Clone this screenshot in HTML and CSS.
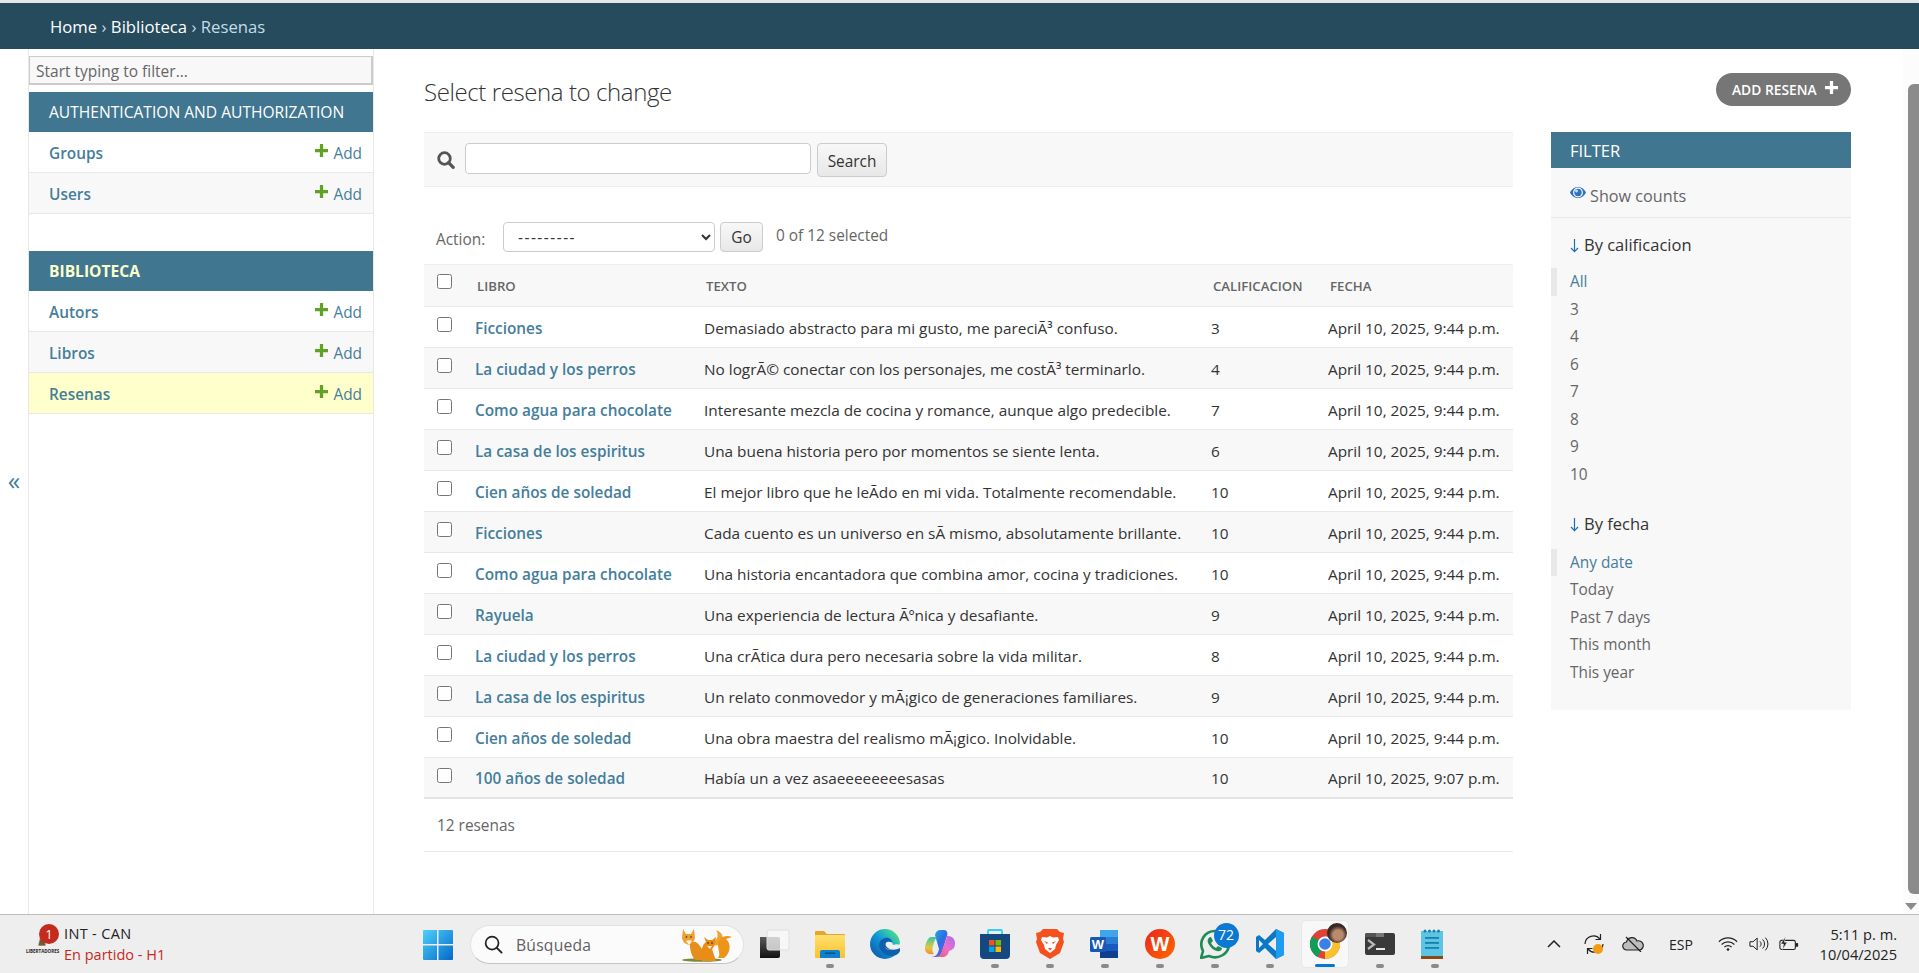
FILE: index.html
```html
<!DOCTYPE html>
<html lang="en">
<head>
<meta charset="utf-8">
<title>Select resena to change</title>
<link rel="stylesheet" href="styles.css">
</head>
<body>
<header class="crumbs"><a>Home</a> › <a>Biblioteca</a> › <span class="crumb-here">Resenas</span></header>
<div class="page">
  <button class="toggle">«</button>
  <nav class="sidebar">
    <input class="nav-filter" placeholder="Start typing to filter...">
    <section class="module">
      <h2 class="mod-head">AUTHENTICATION AND AUTHORIZATION</h2>
      <div class="mod-row"><a class="mod-link">Groups</a><a class="mod-add"><svg class="plus" viewBox="0 0 12 12"><path d="M4.500 0h3v4.500H12v3H7.500V12h-3V7.500H0v-3h4.500z"/></svg>Add</a></div>
      <div class="mod-row alt"><a class="mod-link">Users</a><a class="mod-add"><svg class="plus" viewBox="0 0 12 12"><path d="M4.500 0h3v4.500H12v3H7.500V12h-3V7.500H0v-3h4.500z"/></svg>Add</a></div>
    </section>
    <section class="module">
      <h2 class="mod-head current">BIBLIOTECA</h2>
      <div class="mod-row"><a class="mod-link">Autors</a><a class="mod-add"><svg class="plus" viewBox="0 0 12 12"><path d="M4.500 0h3v4.500H12v3H7.500V12h-3V7.500H0v-3h4.500z"/></svg>Add</a></div>
      <div class="mod-row alt"><a class="mod-link">Libros</a><a class="mod-add"><svg class="plus" viewBox="0 0 12 12"><path d="M4.500 0h3v4.500H12v3H7.500V12h-3V7.500H0v-3h4.500z"/></svg>Add</a></div>
      <div class="mod-row active"><a class="mod-link">Resenas</a><a class="mod-add"><svg class="plus" viewBox="0 0 12 12"><path d="M4.500 0h3v4.500H12v3H7.500V12h-3V7.500H0v-3h4.500z"/></svg>Add</a></div>
    </section>
  </nav>
  <main class="content">
    <div class="title-row">
      <h1 class="title">Select resena to change</h1>
      <a class="add-btn">ADD RESENA<svg class="plus-white" viewBox="0 0 12 12"><path d="M4.500 0h3v4.500H12v3H7.500V12h-3V7.500H0v-3h4.500z"/></svg></a>
    </div>
    <div class="columns">
      <div class="changelist">
        <form class="search-band">
          <svg class="search-icon" viewBox="0 0 18 18"><circle cx="7.500" cy="7.500" r="5.800" fill="none" stroke="#555" stroke-width="2.800"/><path d="M11.600 11.600l4.600 4.800" stroke="#555" stroke-width="3.200" stroke-linecap="round"/></svg>
          <input class="search-input">
          <button class="btn search-btn" type="button">Search</button>
        </form>
        <div class="actions">
          <label class="act-label">Action:</label>
          <select class="act-select"><option>---------</option></select>
          <button class="btn go-btn" type="button">Go</button>
          <span class="act-count">0 of 12 selected</span>
        </div>
        <table class="results">
          <thead>
            <tr><th class="c-check"><input type="checkbox" class="cb"></th><th class="c-libro">LIBRO</th><th class="c-texto">TEXTO</th><th class="c-cal">CALIFICACION</th><th class="c-fecha">FECHA</th></tr>
          </thead>
          <tbody>
            <tr><td class="c-check"><input type="checkbox" class="cb"></td><td class="c-libro"><a>Ficciones</a></td><td>Demasiado abstracto para mi gusto, me pareciÃ³ confuso.</td><td>3</td><td>April 10, 2025, 9:44 p.m.</td></tr>
            <tr><td class="c-check"><input type="checkbox" class="cb"></td><td class="c-libro"><a>La ciudad y los perros</a></td><td>No logrÃ© conectar con los personajes, me costÃ³ terminarlo.</td><td>4</td><td>April 10, 2025, 9:44 p.m.</td></tr>
            <tr><td class="c-check"><input type="checkbox" class="cb"></td><td class="c-libro"><a>Como agua para chocolate</a></td><td>Interesante mezcla de cocina y romance, aunque algo predecible.</td><td>7</td><td>April 10, 2025, 9:44 p.m.</td></tr>
            <tr><td class="c-check"><input type="checkbox" class="cb"></td><td class="c-libro"><a>La casa de los espiritus</a></td><td>Una buena historia pero por momentos se siente lenta.</td><td>6</td><td>April 10, 2025, 9:44 p.m.</td></tr>
            <tr><td class="c-check"><input type="checkbox" class="cb"></td><td class="c-libro"><a>Cien años de soledad</a></td><td>El mejor libro que he leÃ­do en mi vida. Totalmente recomendable.</td><td>10</td><td>April 10, 2025, 9:44 p.m.</td></tr>
            <tr><td class="c-check"><input type="checkbox" class="cb"></td><td class="c-libro"><a>Ficciones</a></td><td>Cada cuento es un universo en sÃ­ mismo, absolutamente brillante.</td><td>10</td><td>April 10, 2025, 9:44 p.m.</td></tr>
            <tr><td class="c-check"><input type="checkbox" class="cb"></td><td class="c-libro"><a>Como agua para chocolate</a></td><td>Una historia encantadora que combina amor, cocina y tradiciones.</td><td>10</td><td>April 10, 2025, 9:44 p.m.</td></tr>
            <tr><td class="c-check"><input type="checkbox" class="cb"></td><td class="c-libro"><a>Rayuela</a></td><td>Una experiencia de lectura Ãºnica y desafiante.</td><td>9</td><td>April 10, 2025, 9:44 p.m.</td></tr>
            <tr><td class="c-check"><input type="checkbox" class="cb"></td><td class="c-libro"><a>La ciudad y los perros</a></td><td>Una crÃ­tica dura pero necesaria sobre la vida militar.</td><td>8</td><td>April 10, 2025, 9:44 p.m.</td></tr>
            <tr><td class="c-check"><input type="checkbox" class="cb"></td><td class="c-libro"><a>La casa de los espiritus</a></td><td>Un relato conmovedor y mÃ¡gico de generaciones familiares.</td><td>9</td><td>April 10, 2025, 9:44 p.m.</td></tr>
            <tr><td class="c-check"><input type="checkbox" class="cb"></td><td class="c-libro"><a>Cien años de soledad</a></td><td>Una obra maestra del realismo mÃ¡gico. Inolvidable.</td><td>10</td><td>April 10, 2025, 9:44 p.m.</td></tr>
            <tr><td class="c-check"><input type="checkbox" class="cb"></td><td class="c-libro"><a>100 años de soledad</a></td><td>Había un a vez asaeeeeeeeesasas</td><td>10</td><td>April 10, 2025, 9:07 p.m.</td></tr>
          </tbody>
        </table>
        <p class="paginator">12 resenas</p>
      </div>
      <aside class="filter">
        <h2 class="filter-head">FILTER</h2>
        <div class="counts"><svg class="eye" viewBox="0 0 16 16"><path d="M0 7.500C2 3.500 5 2 8 2s6 1.500 8 5.500C14 11.500 11 13 8 13S2 11.500 0 7.500z" fill="#2f74c0"/><circle cx="8" cy="7.500" r="4.300" fill="#2f74c0" stroke="#fff" stroke-width="1.200"/><circle cx="6.500" cy="6" r="1.400" fill="#cfe2f5"/></svg>Show counts</div>
        <div class="facet">
          <h3 class="facet-title"><svg class="arrow" viewBox="0 0 9 15"><path d="M4.500 1v12.500M1 10l3.500 3.700L8 10" fill="none" stroke="#1f6fb8" stroke-width="1.200"/></svg>By calificacion</h3>
          <ul class="facet-list">
            <li class="on">All</li><li>3</li><li>4</li><li>6</li><li>7</li><li>8</li><li>9</li><li>10</li>
          </ul>
        </div>
        <div class="facet">
          <h3 class="facet-title"><svg class="arrow" viewBox="0 0 9 15"><path d="M4.500 1v12.500M1 10l3.500 3.700L8 10" fill="none" stroke="#1f6fb8" stroke-width="1.200"/></svg>By fecha</h3>
          <ul class="facet-list">
            <li class="on">Any date</li><li>Today</li><li>Past 7 days</li><li>This month</li><li>This year</li>
          </ul>
        </div>
      </aside>
    </div>
  </main>
  <div class="scrollbar"><div class="thumb"></div><div class="scroll-arrow"></div></div>
</div>
<footer class="taskbar">
  <div class="news">
    <div class="news-icon">
      <svg class="trophy" viewBox="0 0 14 24"><path d="M7 1c2 3 1 6 2 9l3 12H2L5 10c1-3 0-6 2-9z" fill="#a8895a"/><path d="M3 22l2-8h4l2 8z" fill="#6d5a3a"/></svg>
      <span class="lib-text">LIBERTADORES</span>
      <span class="news-badge">1</span>
    </div>
    <div class="news-text"><span class="news-a">INT - CAN</span><span class="news-b">En partido - H1</span></div>
  </div>
  <svg class="start" viewBox="0 0 30 30">
    <defs><linearGradient id="win" x1="0" y1="0" x2="1" y2="1"><stop offset="0" stop-color="#4fd0fb"/><stop offset="1" stop-color="#0369c9"/></linearGradient></defs>
    <path d="M1 0h13v14H0V1a1 1 0 0 1 1-1zM15.500 0H29a1 1 0 0 1 1 1v13H15.500zM0 15.500h14V30H1a1 1 0 0 1-1-1zM15.500 15.500H30V29a1 1 0 0 1-1 1H15.500z" fill="url(#win)"/>
  </svg>
  <div class="search-pill">
    <svg class="pill-icon" viewBox="0 0 20 20"><circle cx="8.500" cy="8.500" r="6.800" fill="none" stroke="#222" stroke-width="1.800"/><path d="M13.500 13.500l5 5" stroke="#222" stroke-width="2" stroke-linecap="round"/></svg>
    <span class="pill-text">Búsqueda</span>
    <svg class="foxes" viewBox="0 0 54 34">
      <ellipse cx="24" cy="32" rx="20" ry="1.800" fill="#7d8a3a"/>
      <path d="M34 14c6-1 7-8 4-12 6 2 8 7 6 12-2 3-5 4-9 3z" fill="#f0a22c"/>
      <path d="M46 30c6-4 8-14 2-19l6-2c-8-3-14 2-14 8 0 5 3 9 0 13z" fill="#ee9418"/>
      <path d="M12 14c-1 5 2 17 6 18h10c-2-6-4-14-10-18z" fill="#e58e1c"/>
      <path d="M5 1l3 5h5l3-5 1 9c-1 4-3 6-6 7-4-1-6-3-7-7z" fill="#f0a030"/>
      <path d="M8 13l3 4 3-4c-1-1-5-1-6 0z" fill="#fff2d8"/>
      <path d="M24 26c-1-5 1-10 4-12l-2-5 4 3h4l4-3-1 6c0 3-2 5-3 6l4 12H24z" fill="#ea8d18"/>
      <path d="M29 18l3 3 2-3z" fill="#fff2d8"/>
      <circle cx="8.500" cy="9" r=".8" fill="#222"/><circle cx="13" cy="9" r=".8" fill="#222"/>
      <circle cx="30" cy="15" r=".8" fill="#222"/><circle cx="34" cy="15" r=".8" fill="#222"/>
    </svg>
  </div>
  <div class="apps">
    <div class="app"><div class="tile">
      <svg class="ico" viewBox="0 0 30 30"><defs><linearGradient id="tv" x1="0" y1="0" x2="0" y2="1"><stop offset="0" stop-color="#5a5a5a"/><stop offset="1" stop-color="#111"/></linearGradient></defs><rect x="-12" y="8" width="32" height="21" rx="2" fill="url(#tv)"/><rect x="7" y="1" width="22" height="20" rx="2" fill="#fafafa" fill-opacity=".75" stroke="#dedede"/></svg>
    </div></div>
    <div class="app"><div class="tile">
      <svg class="ico" viewBox="0 0 30 30"><defs><linearGradient id="fd" x1="0" y1="0" x2="0" y2="1"><stop offset="0" stop-color="#ffdf6d"/><stop offset="1" stop-color="#fbc22b"/></linearGradient></defs><path d="M0 3a1 1 0 0 1 1-1h8l3 3h17a1 1 0 0 1 1 1v22H0z" fill="#e3a72b"/><rect y="6" width="30" height="23" rx="1" fill="url(#fd)"/><path d="M5 29v-6a2 2 0 0 1 2-2h16a2 2 0 0 1 2 2v6z" fill="#0f7fcf"/><rect x="10" y="23.500" width="10" height="1.500" fill="#0b4f86"/></svg>
      <i class="dot"></i>
    </div></div>
    <div class="app"><div class="tile">
      <svg class="ico" viewBox="0 0 30 30"><defs><linearGradient id="ed" x1="0" y1="1" x2="1" y2="0"><stop offset="0" stop-color="#0a4f9e"/><stop offset=".5" stop-color="#1296d8"/><stop offset=".75" stop-color="#33c9a8"/><stop offset="1" stop-color="#7fe05a"/></linearGradient></defs><circle cx="15" cy="15" r="15" fill="url(#ed)"/><path d="M30 17c-3 1-7 2-11 1-3-1-3-4-1-5 2 0 3 1 4 2 1-4-3-7-7-6-5 1-7 6-5 11 2 4 6 7 11 7 4 0 8-2 9-5z" fill="#0f5fb0"/><path d="M15 18c1 3 6 4 10 2 2-1 4-3 5-6l1 4h-4c-3 3-9 4-12 0z" fill="#eeeeee"/><path d="M17 13c3-1 6 0 6 3 2-1 5-1 7 0v3c-4 2-9 2-12 0-3-2-3-5-1-6z" fill="#eeeeee"/></svg>
    </div></div>
    <div class="app"><div class="tile">
      <svg class="ico" viewBox="0 0 30 30"><defs><linearGradient id="co1" x1="0" y1="0" x2="1" y2="1"><stop offset="0" stop-color="#22b8e8"/><stop offset=".5" stop-color="#2c6fe0"/><stop offset="1" stop-color="#9b4fd8"/></linearGradient><linearGradient id="co2" x1="0" y1="1" x2="1" y2="0"><stop offset="0" stop-color="#f35a5a"/><stop offset=".5" stop-color="#ec6fd0"/><stop offset="1" stop-color="#a86be8"/></linearGradient><linearGradient id="co3" x1="0" y1="0" x2="0" y2="1"><stop offset="0" stop-color="#36c8a0"/><stop offset=".6" stop-color="#e0c840"/><stop offset="1" stop-color="#f09030"/></linearGradient></defs><path d="M10 6C11 2 13 1 16 1h3c3 0 4 3 3 6l-5 16c-1 3-3 5-6 5H6c6 0 7-4 8-8z" fill="url(#co1)"/><path d="M6 8h6c-2 2-3 5-4 9-1 3-1 6 1 8-5 1-9-1-9-5 0-5 3-12 6-12z" fill="url(#co3)"/><path d="M24 22c-1 4-3 6-7 6h-6c4 0 5-3 6-6l5-14c-1-2 0-1 1-1 4 0 7 3 7 7 0 5-2 7-6 8z" fill="url(#co2)"/></svg>
    </div></div>
    <div class="app"><div class="tile">
      <svg class="ico" viewBox="0 0 30 30"><path d="M8 6V2a1 1 0 0 1 1-1h12a1 1 0 0 1 1 1v4" fill="none" stroke="#2ed1f5" stroke-width="1.800"/><path d="M0 5h30v21a4 4 0 0 1-4 4H4a4 4 0 0 1-4-4z" fill="#15487f"/><rect x="9" y="11" width="5.500" height="5.500" fill="#f25022"/><rect x="15.500" y="11" width="5.500" height="5.500" fill="#7fba00"/><rect x="9" y="17.500" width="5.500" height="5.500" fill="#00a4ef"/><rect x="15.500" y="17.500" width="5.500" height="5.500" fill="#ffb900"/></svg>
      <i class="dot"></i>
    </div></div>
    <div class="app"><div class="tile">
      <svg class="ico" viewBox="0 0 30 30"><path d="M8 0h14l3 3 4 1-1 6 1 3-4 11-10 6-10-6L1 13l1-3-1-6 4-1z" fill="#f4511e"/><path d="M7 8l5 .5L15 7l3 1.500 5-.5 1 3-3 5-1 4-5 4-5-4-1-4-3-5z" fill="#fff"/><path d="M9 12l4 1.500-1 1.500zM21 12l-4 1.500 1 1.500zM13 19h4l-2 2.500z" fill="#f4511e"/></svg>
      <i class="dot"></i>
    </div></div>
    <div class="app"><div class="tile">
      <svg class="ico" viewBox="0 0 30 30"><path d="M10 1h17a1 1 0 0 1 1 1v26a1 1 0 0 1-1 1H10z" fill="#2b7cd3"/><rect x="10" y="1" width="18" height="7" fill="#41a5ee"/><rect x="10" y="15" width="18" height="7" fill="#185abd"/><rect x="10" y="22" width="18" height="7" fill="#103f91"/><rect y="8" width="16" height="15" rx="1.500" fill="#1a57b5"/><text x="8" y="20" class="word-w">W</text></svg>
      <i class="dot"></i>
    </div></div>
    <div class="app"><div class="tile">
      <svg class="ico" viewBox="0 0 30 30"><defs><linearGradient id="wps" x1="0" y1="0" x2="1" y2="1"><stop offset="0" stop-color="#e9241c"/><stop offset="1" stop-color="#ff6a00"/></linearGradient></defs><circle cx="15" cy="15" r="15" fill="url(#wps)"/><text x="15" y="22" class="wps-w">W</text></svg>
      <i class="dot"></i>
    </div></div>
    <div class="app"><div class="tile">
      <svg class="ico" viewBox="0 0 30 30"><path d="M1 29l2-7C-2 12 5 2 15 2c8 0 14 6 14 13 0 10-11 16-20 12z" fill="none" stroke="#1e8c55" stroke-width="2.600" stroke-linejoin="round"/><path d="M10 8c-2 1-3 3-2 6 2 4 5 7 9 8 3 1 5-1 5-3l-4-2-2 2c-2-1-4-3-5-5l2-2-2-4z" fill="#1e8c55"/></svg>
      <span class="wa-badge">72</span>
      <i class="dot"></i>
    </div></div>
    <div class="app"><div class="tile">
      <svg class="ico" viewBox="0 0 30 30"><path d="M21 0l8 4v22l-8 4-11-11-6 5-3-2v-14l3-2 6 5z" fill="#0a78c4"/><path d="M21 0l8 4v22l-8 4z" fill="#1f9cf0"/><path d="M21 8l-8 7 8 7z" fill="#eeeeee"/><path d="M4 11v8l4-4z" fill="#eeeeee"/></svg>
      <i class="dot"></i>
    </div></div>
    <div class="app"><div class="tile tile-on">
      <svg class="ico" viewBox="0 0 30 30"><circle cx="15" cy="15" r="15" fill="#db4437"/><path d="M2 22.500A15 15 0 0 1 2 7.500L15 15l-7.500 13A15 15 0 0 1 2 22.500z" fill="#0f9d58"/><path d="M15 30A15 15 0 0 0 28 7.500H15l0 7.500z" fill="#fbc02d"/><circle cx="15" cy="15" r="7.500" fill="#fff"/><circle cx="15" cy="15" r="5.800" fill="#3d7fe8"/></svg>
      <span class="avatar"><i class="avatar-face"></i></span>
      <i class="dot dot-on"></i>
    </div></div>
    <div class="app"><div class="tile">
      <svg class="ico" viewBox="0 0 30 22"><rect width="30" height="22" rx="2" fill="#3a3a3a"/><path d="M0 2a2 2 0 0 1 2-2h9v4H0z" fill="#545454"/><path d="M11 0h8v4h-8z" fill="#777"/><path d="M3 7l6 4.500L3 16" fill="none" stroke="#b8b8b8" stroke-width="2.200"/><rect x="11" y="15" width="9" height="2" fill="#e8e8e8"/></svg>
      <i class="dot"></i>
    </div></div>
    <div class="app"><div class="tile">
      <svg class="ico" viewBox="0 0 30 30"><rect x="1" y="2" width="22" height="27" fill="#5cc4e4"/><rect x="1" y="27" width="22" height="3" fill="#8a4a14"/><g fill="#1b7fa8"><circle cx="5" cy="2" r="1.500"/><circle cx="9.500" cy="2" r="1.500"/><circle cx="14" cy="2" r="1.500"/><circle cx="18.500" cy="2" r="1.500"/><rect x="5" y="8" width="14" height="1.800"/><rect x="5" y="13" width="14" height="1.800"/><rect x="5" y="18" width="14" height="1.800"/></g></svg>
      <i class="dot"></i>
    </div></div>
  </div>
  <div class="tray">
    <svg class="t-chev" viewBox="0 0 14 8"><path d="M1 7l6-6 6 6" fill="none" stroke="#222" stroke-width="1.500"/></svg>
    <span class="t-sync">
      <svg viewBox="0 0 22 22"><path d="M2 11a8.500 8.500 0 0 1 15-5M20 11a8.500 8.500 0 0 1-15 5" fill="none" stroke="#222" stroke-width="1.200"/><path d="M17.500 1v5.500h-5M4.500 21v-5.500h5" fill="none" stroke="#222" stroke-width="1.200"/><circle cx="15" cy="16" r="5" fill="#f39c12"/></svg>
    </span>
    <svg class="t-cloud" viewBox="0 0 22 16"><path d="M5 14a4 4 0 0 1-.5-8 5.500 5.500 0 0 1 10.500-1 4.500 4.500 0 0 1 3 9z" fill="#bdbdbd" stroke="#222" stroke-width="1.200"/><path d="M4 1l15 15" stroke="#222" stroke-width="1.200"/></svg>
    <span class="t-lang">ESP</span>
    <svg class="t-wifi" viewBox="0 0 22 16"><path d="M1 5.500a14 14 0 0 1 20 0M4 8.500a10 10 0 0 1 14 0M7 11.500a5.500 5.500 0 0 1 8 0" fill="none" stroke="#222" stroke-width="1.300"/><circle cx="11" cy="14" r="1.400" fill="#222"/></svg>
    <svg class="t-vol" viewBox="0 0 22 16"><path d="M1 5.500h3.500L9 1.500v13l-4.500-4H1z" fill="none" stroke="#222" stroke-width="1.100"/><path d="M12 5a4 4 0 0 1 0 6M15 3a7 7 0 0 1 0 10M18 1a10 10 0 0 1 0 14" fill="none" stroke="#222" stroke-width="1.100"/></svg>
    <svg class="t-bat" viewBox="0 0 22 16"><rect x="1" y="4" width="17" height="10" rx="2" fill="none" stroke="#222" stroke-width="1.200"/><rect x="18.500" y="7" width="2.500" height="4" fill="#222"/><path d="M7 0L2 8h3l-1 6 5-8H6z" fill="#222" stroke="#eee" stroke-width=".6"/></svg>
    <div class="t-clock"><span>5:11 p. m.</span><span>10/04/2025</span></div>
  </div>
</footer>
</body>
</html>
```
FILE: styles.css
```css
* { box-sizing: border-box; }
html, body { height: 100%; }
body {
  margin: 0;
  height: 973px;
  overflow: hidden;
  display: flex;
  flex-direction: column;
  background: #fff;
  color: #333;
  font-family: "Open Sans", "Noto Sans", sans-serif;
  font-size: 15.400px;
}
h1, h2, h3, p, ul { margin: 0; padding: 0; }
ul { list-style: none; }

.crumbs {
  height: 49px;
  flex: none;
  border-top: 3px solid #e6e6e6;
  background: #264b5d;
  color: #c4dce8;
  padding-left: 50px;
  font-size: 16.700px;
  line-height: 47px;
}
.crumbs a { color: #fff; }
.crumb-here { color: #c4dce8; }

.page { flex: 1; display: flex; min-height: 0; }

.toggle {
  width: 29px;
  flex: none;
  border: 0;
  border-right: 1px solid #e8e8e8;
  background: #fff;
  color: #447e9b;
  font-family: "Open Sans", sans-serif;
  font-size: 25px;
  padding: 0 0 4px;
}
.sidebar {
  width: 345px;
  flex: none;
  border-right: 1px solid #e8e8e8;
  padding-top: 7px;
}
.nav-filter {
  display: block;
  width: 100%;
  height: 29px;
  margin-bottom: 7px;
  padding: 2px 6px 0;
  border: 1px solid #ccc;
  border-width: 1px 2px 2px 1px;
  background: #f8f8f8;
  font: 15.500px "Open Sans", sans-serif;
  border-radius: 0;
}
.nav-filter::placeholder { color: #666; opacity: 1; }
.module { margin-bottom: 37px; }
.mod-head {
  height: 40px;
  padding-left: 20px;
  background: #417690;
  color: #fff;
  font-size: 15.600px;
  font-weight: 400;
  line-height: 40px;
}
.mod-head.current { color: #ffc; font-weight: 700; }
.mod-row {
  height: 41px;
  display: flex;
  align-items: center;
  justify-content: space-between;
  padding: 2px 11px 0 20px;
  border-bottom: 1px solid #e8e8e8;
}
.mod-row.alt { background: #f8f8f8; }
.mod-row.active { background: #ffc; }
.mod-link { color: #447e9b; font-weight: 600; font-size: 15.400px; }
.mod-add { color: #447e9b; font-size: 15.400px; display: flex; align-items: center; }
.plus { width: 13px; height: 13px; fill: #5fa225; margin: -6px 5px 0 0; }

.content { flex: 1; min-width: 0; padding: 24px 52px 0 50px; }
.title-row { display: flex; justify-content: space-between; align-items: flex-start; height: 35px; margin-bottom: 24px; }
.title { font-size: 24px; font-weight: 300; color: #333; letter-spacing: -0.4px; line-height: 38px; }
.add-btn {
  width: 135px;
  height: 33px;
  display: flex;
  align-items: center;
  gap: 8px;
  padding: 0 11px 0 16px;
  border-radius: 17px;
  background: #767676;
  color: #fff;
  font-size: 13.800px;
  font-weight: 600;
  white-space: nowrap;
}
.plus-white { width: 13px; height: 13px; fill: #fff; margin-top: -4px; flex: none; }

.columns { display: flex; gap: 38px; align-items: flex-start; }
.changelist { width: 1089px; flex: none; }

.search-band {
  height: 55px;
  display: flex;
  align-items: flex-start;
  padding: 10px 0 0 13px;
  background: #f8f8f8;
  border-top: 1px solid #eee;
  border-bottom: 1px solid #eee;
}
.search-icon { width: 18px; height: 18px; margin: 8px 10px 0 0; flex: none; }
.search-input {
  width: 346px;
  height: 31px;
  border: 1px solid #ccc;
  border-radius: 4px;
  background: #fff;
}
.btn {
  border: 1px solid #ccc;
  border-radius: 4px;
  background: linear-gradient(#f8f8f8, #e8e8e8);
  color: #333;
  font: 15.400px "Open Sans", sans-serif;
  padding: 0;
}
.search-btn { width: 70px; height: 34px; margin-left: 6px; padding-top: 2px; }
.actions { height: 77px; display: flex; align-items: flex-start; padding: 35px 0 0 12px; color: #666; }
.act-label { width: 67px; margin-top: 7px; }
.act-select {
  width: 212px;
  height: 30px;
  border: 1px solid #ccc;
  border-radius: 4px;
  background: #fff;
  padding-left: 10px;
  color: #333;
  font: 15.400px "Open Sans", sans-serif;
  letter-spacing: 1.500px;
}
.go-btn { width: 43px; height: 30px; margin-left: 5px; }
.act-count { margin: 3px 0 0 13px; }

.results { width: 100%; border-collapse: collapse; table-layout: fixed; }
.results th {
  height: 42px;
  padding: 0 0 0 2px;
  background: #f8f8f8;
  border-top: 1px solid #eee;
  border-bottom: 1px solid #e8e8e8;
  color: #666;
  font-size: 13.200px;
  font-weight: 600;
  text-align: left;
}
.results td {
  height: 41px;
  padding: 2px 0 0;
  border-bottom: 1px solid #e8e8e8;
  font-size: 15.350px;
}
.results tbody tr:nth-child(even) td { background: #f8f8f8; }
.results tbody tr:last-child td { height: 40px; border-bottom: 2px solid #e4e4e4; }
.c-check { width: 51px; padding-left: 13px !important; padding-top: 0 !important; vertical-align: top; }
.c-check .cb { display: block; width: 15px; height: 15px; margin: 10px 0 0; }
.results th .cb { margin-top: 9px; }
.c-libro { width: 229px; }
.c-texto { width: 507px; }
.c-cal { width: 117px; }
.results td a { color: #447e9b; font-weight: 600; }
.paginator {
  height: 53px;
  padding-left: 13px;
  border-bottom: 1px solid #e8e8e8;
  color: #666;
  line-height: 53px;
}

.filter { width: 300px; flex: none; height: 578px; background: #f8f8f8; }
.filter-head {
  height: 36px;
  padding-left: 19px;
  background: #417690;
  color: #fff;
  font-size: 16.500px;
  font-weight: 400;
  line-height: 37px;
}
.counts {
  height: 50px;
  display: flex;
  align-items: center;
  padding: 6px 0 0 19px;
  border-bottom: 1px solid #e8e8e8;
  color: #666;
  font-size: 16.200px;
}
.eye { width: 16px; height: 16px; margin: -6px 4px 0 0; }
.facet { padding-top: 13px; margin-bottom: 8.700px; }
.facet-title { padding-left: 19px; height: 37px; font-size: 16.500px; font-weight: 400; line-height: 28px; color: #333; }
.facet + .facet .facet-title { height: 39px; }
.arrow { width: 9px; height: 15px; margin-right: 5px; vertical-align: -2px; }
.facet-list li {
  height: 27.500px;
  padding-left: 13px;
  border-left: 6px solid transparent;
  color: #666;
  font-size: 15.400px;
  line-height: 27.500px;
}
.facet-list li.on { border-left-color: #e8e8e8; color: #447e9b; }

.scrollbar { width: 16px; flex: none; position: relative; background: #fcfcfc; }
.thumb { position: absolute; top: 35px; right: 0; width: 11px; height: 810px; border-radius: 6px 0 0 6px; background: #8b8b8b; }
.scroll-arrow {
  position: absolute;
  bottom: 4px;
  right: 2px;
  border: 6px solid transparent;
  border-top: 7px solid #8b8b8b;
  border-bottom: 0;
}

.taskbar {
  height: 59px;
  flex: none;
  display: flex;
  align-items: flex-start;
  background: #eeeeee;
  border-top: 1px solid #bdbdbd;
}
.news { width: 423px; flex: none; display: flex; padding: 7px 0 0 26px; }
.news-icon { width: 38px; height: 40px; position: relative; }
.trophy { position: absolute; left: 10px; top: 6px; width: 12px; height: 19px; }
.lib-text { position: absolute; left: 0; top: 26px; font-size: 4.500px; font-weight: 700; color: #222; white-space: nowrap; }
.news-badge {
  position: absolute;
  left: 13px;
  top: 2px;
  width: 20px;
  height: 20px;
  border-radius: 50%;
  background: #c42b1c;
  color: #fff;
  font-size: 13px;
  line-height: 20px;
  text-align: center;
}
.news-text { display: flex; flex-direction: column; font-size: 14.500px; line-height: 21px; margin-top: 1px; }
.news-a { color: #222; letter-spacing: .35px; }
.news-b { color: #c42b1c; }
.start { width: 30px; height: 30px; margin-top: 15px; flex: none; }
.search-pill {
  width: 274px;
  height: 39px;
  margin: 10px 0 0 17px;
  flex: none;
  display: flex;
  align-items: center;
  padding-left: 13px;
  border-radius: 20px;
  background: #fbfbfb;
  border: 1px solid #e2e2e2;
  border-bottom-color: #c4c4c4;
}
.pill-icon { width: 19px; height: 19px; margin-right: 13px; flex: none; }
.pill-text { color: #5f5f5f; font-size: 15.700px; flex: 1; letter-spacing: .2px; }
.foxes { width: 54px; height: 34px; margin-right: 11px; flex: none; }

.apps { display: flex; padding-top: 5px; margin-left: 3px; flex: none; }
.app { width: 55px; display: flex; justify-content: center; }
.tile {
  width: 48px;
  height: 48px;
  display: flex;
  flex-direction: column;
  align-items: center;
  padding-top: 9px;
  border-radius: 5px;
  position: relative;
}
.tile-on { background: #f8f8f8; border: 1px solid #e8e8e8; padding-top: 8px; }
.ico { width: 30px; height: 30px; flex: none; }
.word-w { fill: #fff; font: 700 13px "Liberation Sans", sans-serif; text-anchor: middle; }
.wps-w { fill: #fff; font: 700 20px "Liberation Sans", sans-serif; text-anchor: middle; }
.dot { width: 8px; height: 4px; border-radius: 2px; background: #8a8a8a; margin-top: 5px; }
.dot-on { width: 20px; background: #0078d4; }
.wa-badge {
  position: absolute;
  left: 23px;
  top: 3px;
  width: 25px;
  height: 25px;
  border-radius: 50%;
  background: #0b78d4;
  color: #fff;
  font-size: 14px;
  line-height: 24px;
  text-align: center;
}
.avatar {
  position: absolute;
  left: 25px;
  top: 2px;
  width: 20px;
  height: 20px;
  border-radius: 50%;
  background: radial-gradient(circle at 55% 60%, #b98a6c 0 30%, #3a2b24 55%, #2a211c 100%);
}
.avatar-face { display: block; }

.tray { flex: 1; display: flex; align-items: center; height: 58px; position: relative; padding-left: 85px; }
.t-chev { width: 14px; height: 8px; flex: none; }
.t-sync { width: 22px; height: 22px; margin-left: 22px; flex: none; display: block; }
.t-sync svg { display: block; width: 22px; height: 22px; }
.t-cloud { width: 22px; height: 16px; margin-left: 17px; flex: none; }
.t-lang { margin-left: 25px; font-size: 14px; color: #222; width: 28px; }
.t-wifi { width: 20px; height: 16px; margin-left: 21px; flex: none; }
.t-vol { width: 20px; height: 16px; margin-left: 11px; flex: none; }
.t-bat { width: 20px; height: 16px; margin-left: 10px; flex: none; }
.t-clock { margin-left: auto; margin-right: 22px; display: flex; flex-direction: column; align-items: flex-end; font-size: 14.600px; line-height: 20px; color: #222; }
```
